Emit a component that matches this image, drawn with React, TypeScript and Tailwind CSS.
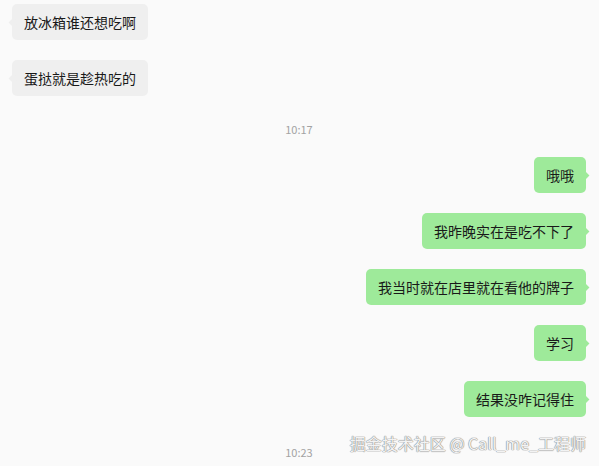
import React from "react";

type Msg =
  | { kind: "in" | "out"; text: string; mt: string }
  | { kind: "time"; text: string; mt: string };

const messages: Msg[] = [
  { kind: "in", text: "放冰箱谁还想吃啊", mt: "mt-[4px]" },
  { kind: "in", text: "蛋挞就是趁热吃的", mt: "mt-5" },
  { kind: "time", text: "10:17", mt: "mt-[25px]" },
  { kind: "out", text: "哦哦", mt: "mt-5" },
  { kind: "out", text: "我昨晚实在是吃不下了", mt: "mt-5" },
  { kind: "out", text: "我当时就在店里就在看他的牌子", mt: "mt-5" },
  { kind: "out", text: "学习", mt: "mt-5" },
  { kind: "out", text: "结果没咋记得住", mt: "mt-5" },
  { kind: "time", text: "10:23", mt: "mt-[27px]" },
];

function Bubble({ text, mine }: { text: string; mine: boolean }) {
  return (
    <div className={`flex ${mine ? "justify-end" : "justify-start"}`}>
      <div
        className={`relative rounded-[5px] px-3 py-2 text-[14px] leading-5 text-[#191919] ${
          mine ? "bg-[#9eea9a]" : "bg-[#efefef]"
        }`}
      >
        <span
          className={`absolute top-1/2 -mt-[3.5px] h-[7px] w-[7px] rotate-45 ${
            mine ? "right-[-2px] bg-[#9eea9a]" : "left-[-2px] bg-[#efefef]"
          }`}
        />
        <span className="relative">{text}</span>
      </div>
    </div>
  );
}

export default function App() {
  return (
    <div
      className="relative h-[466px] w-[599px] overflow-hidden bg-[#fafafa] pl-3 pr-[13px]"
      style={{ fontFamily: '"Noto Sans CJK SC", "Noto Sans", sans-serif' }}
    >
      {messages.map((m, i) => (
        <div key={i} className={m.mt}>
          {m.kind === "time" ? (
            <div className="text-center text-[11px] leading-4 text-[#a3a3a3]">
              {m.text}
            </div>
          ) : (
            <Bubble text={m.text} mine={m.kind === "out"} />
          )}
        </div>
      ))}

      <div className="absolute right-[13px] top-[432px] text-[16px] leading-[22px] text-[#f3f3f3] [text-shadow:0_0_1px_#909090,0_0_1px_#909090,0_0_1px_#909090]">
        掘金技术社区 @ Call_me_工程师
      </div>
    </div>
  );
}
